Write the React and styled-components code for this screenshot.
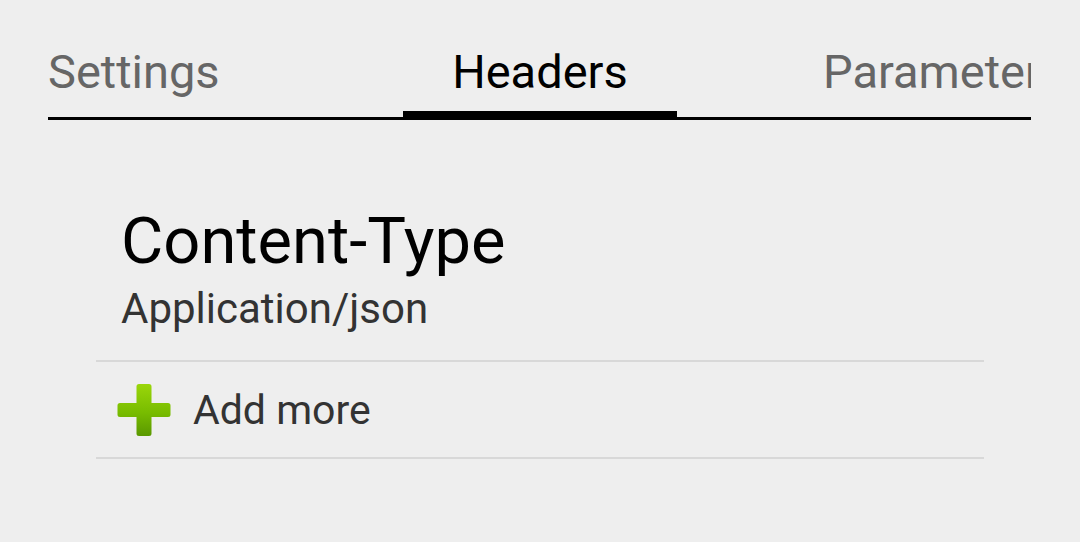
import React from 'react'
import styled, { createGlobalStyle } from 'styled-components'

const GlobalStyle = createGlobalStyle`
    html, body {
        margin: 0;
        padding: 0;
        background: #eeeeee;
        font-family: Roboto, "Noto Sans", sans-serif;
    }
`

const Screen = styled.div`
    width: 1080px;
    height: 542px;
    background: #eeeeee;
    overflow: hidden;
    padding: 0 49px 0 48px;
    box-sizing: border-box;
`

const TabStrip = styled.div`
    display: flex;
    height: 120px;
    overflow: hidden;
    border-bottom: 3px solid #000;
    box-sizing: border-box;
`

const Tab = styled.div`
    flex: 0 0 ${(p) => p.width}px;
    display: flex;
    align-items: flex-start;
    justify-content: ${(p) => p.align};
    padding-left: ${(p) => p.inset || 0}px;
    padding-top: 44px;
    box-sizing: border-box;
    font-size: 47px;
    line-height: 56px;
    white-space: nowrap;
    color: ${(p) => (p.active ? '#000' : '#666')};
    border-bottom: 6px solid ${(p) => (p.active ? '#000' : 'transparent')};
`

const Body = styled.div`
    padding: 83px 47px 0 48px;
`

const HeaderName = styled.div`
    font-size: 65px;
    color: #000;
    line-height: 76px;
    padding-left: 25px;
`

const HeaderValue = styled.div`
    font-size: 42px;
    color: #333;
    line-height: 48px;
    margin-top: 6px;
    padding-left: 25px;
    padding-bottom: 27px;
    border-bottom: 2px solid #d8d8d8;
`

const AddRow = styled.div`
    display: flex;
    align-items: center;
    gap: 22px;
    height: 95px;
    padding-left: 21px;
    border-bottom: 2px solid #d8d8d8;
    font-size: 41px;
    line-height: 48px;
    color: #333;
`

const PlusIcon = () => (
    <svg width="54" height="54" viewBox="0 0 54 54">
        <defs>
            <linearGradient id="plusGrad" x1="0" y1="0" x2="0" y2="1">
                <stop offset="0" stopColor="#9ad60a" />
                <stop offset="0.55" stopColor="#78bc00" />
                <stop offset="1" stopColor="#5a9800" />
            </linearGradient>
        </defs>
        <path
            d="M22 1 h10 a2.5 2.5 0 0 1 2.5 2.5 v16.5 h16.5 a2.5 2.5 0 0 1 2.5 2.5 v9 a2.5 2.5 0 0 1 -2.5 2.5 h-16.5 v16.5 a2.5 2.5 0 0 1 -2.5 2.5 h-10 a2.5 2.5 0 0 1 -2.5 -2.5 v-16.5 h-16.5 a2.5 2.5 0 0 1 -2.5 -2.5 v-9 a2.5 2.5 0 0 1 2.5 -2.5 h16.5 v-16.5 a2.5 2.5 0 0 1 2.5 -2.5 z"
            fill="url(#plusGrad)"
        />
    </svg>
)

export default function App() {
    return (
        <>
            <GlobalStyle />
            <Screen>
                <TabStrip>
                    <Tab width={355} align="flex-start">Settings</Tab>
                    <Tab width={274} align="center" active>Headers</Tab>
                    <Tab width={400} align="flex-start" inset={146}>Parameters</Tab>
                </TabStrip>
                <Body>
                    <HeaderName>Content-Type</HeaderName>
                    <HeaderValue>Application/json</HeaderValue>
                    <AddRow>
                        <PlusIcon />
                        Add more
                    </AddRow>
                </Body>
            </Screen>
        </>
    )
}
